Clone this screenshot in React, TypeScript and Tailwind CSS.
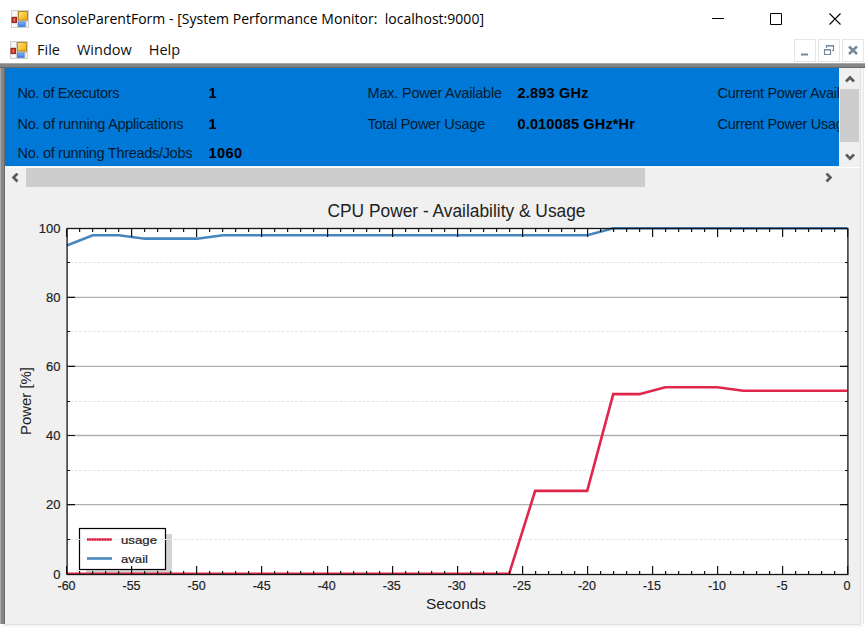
import React from "react";

const px = (t: number) => 66.8 + (t + 60) * 13.01;
const py = (v: number) => 573.8 - v * 3.455;
const points = (data: number[][]) => data.map(([t, v]) => `${px(t)},${py(v)}`).join(" ");

const usage = [[-60, 0], [-26, 0], [-24, 24], [-20, 24], [-18, 52], [-16, 52], [-14, 54], [-10, 54], [-8, 53], [0, 53]];
const avail = [[-60, 95], [-58, 98], [-56, 98], [-54, 97], [-50, 97], [-48, 98], [-20, 98], [-18, 100], [0, 100]];
const seconds = Array.from({ length: 61 }, (_, i) => i - 60);

function FormIcon() {
  return (
    <svg width="18" height="18" viewBox="0 0 18 18" className="shrink-0">
      <defs>
        <linearGradient id="gold" x1="0" y1="0" x2="1" y2="1">
          <stop offset="0" stopColor="#ffe680" />
          <stop offset="1" stopColor="#efa800" />
        </linearGradient>
        <linearGradient id="blue" x1="0" y1="0" x2="0" y2="1">
          <stop offset="0" stopColor="#8db8f5" />
          <stop offset="1" stopColor="#3b75d6" />
        </linearGradient>
      </defs>
      <rect x="0" y="0" width="18" height="18" fill="#cfcfcf" />
      <path d="M1 1h5v5H1zM1 13.5h5V17H1zM15.5 12H17v5h-1.500z" fill="#f6f6f6" />
      <rect x="7.5" y="1.5" width="9" height="8.500" fill="url(#gold)" stroke="#b98a20" />
      <rect x="1" y="7.5" width="4.500" height="5" fill="#c8321e" stroke="#9c2a20" />
      <path d="M3.300 8.500v3" stroke="#f0a090" />
      <rect x="7.5" y="12" width="6.5" height="4.500" fill="url(#blue)" stroke="#5386d8" />
    </svg>
  );
}

function Arrow({ d }: { d: string }) {
  return (
    <svg width="10" height="10" viewBox="0 0 10 10" fill="none" stroke="#5c5c5c" strokeWidth="2.7">
      <path d={d} />
    </svg>
  );
}

function ChildButton({ children }: { children: React.ReactNode }) {
  return <div className="flex h-[23px] w-[22px] items-center justify-center border border-[#e6e6e6] bg-white">{children}</div>;
}

function Chart() {
  return (
    <svg width="855" height="437" viewBox="5 187 855 437" className="block font-['Liberation_Sans',sans-serif]">
      <text x="327.5" y="216.6" fontSize="17.5" fill="#222" textLength="258" lengthAdjust="spacingAndGlyphs">CPU Power - Availability &amp; Usage</text>
      <rect x="67" y="228" width="781" height="347" fill="#fff" />
      <path d="M86 534h86v40H86z" fill="#d3d3d3" />
      <rect x="79.5" y="528.5" width="86" height="41" fill="#fff" stroke="#000" strokeWidth="1.2" />
      {[10, 30, 50, 70, 90].map((v) => (
        <line key={v} x1="70" x2="845" y1={Math.floor(py(v)) + 0.5} y2={Math.floor(py(v)) + 0.5} stroke="#e4e4e4" strokeDasharray="3 1.5" />
      ))}
      {[20, 40, 60, 80].map((v) => (
        <line key={v} x1="67" x2="848" y1={py(v) - 0.1} y2={py(v) - 0.1} stroke="#b0b0b0" strokeWidth="1.3" />
      ))}
      <path d="M87 539.5h25" stroke="#e8607c" strokeWidth="2.8" />
      <path d="M87 539.5h25" stroke="#d01238" strokeWidth="1.6" strokeDasharray="1.500 1" />
      <path d="M87 558.5h25" stroke="#4a88bd" strokeWidth="2.6" />
      <text x="121" y="544" fontSize="11.5" fill="#222" stroke="#222" strokeWidth="0.2" textLength="36" lengthAdjust="spacingAndGlyphs">usage</text>
      <text x="121" y="563" fontSize="11.5" fill="#222" stroke="#222" strokeWidth="0.2" textLength="27" lengthAdjust="spacingAndGlyphs">avail</text>
      <g fill="none" strokeWidth="2.6">
        <polyline points={points(avail)} stroke="#4685bd" />
        <polyline points={points(usage)} stroke="#e0264a" />
      </g>
      <g stroke="#111" strokeWidth="1.2">
        {seconds.map((t) => {
          const x = Math.floor(px(t)) + 0.6;
          const n = t % 5 === 0 ? 8 : 3;
          return <path key={t} d={`M${x} 574v${-n}M${x} 229v${n}`} />;
        })}
        {[10, 20, 30, 40, 50, 60, 70, 80, 90].map((v) => {
          const y = v % 20 === 0 ? py(v) - 0.1 : Math.floor(py(v)) + 0.5;
          const n = v % 20 === 0 ? 8 : 3;
          return <path key={v} d={`M67 ${y}h${n}M848 ${y}h${-n}`} />;
        })}
        <rect x="67.1" y="228.5" width="780.8" height="346" fill="none" stroke="#151515" strokeWidth="1.3" />
      </g>
      <g fontSize="13" fill="#222" stroke="#222" strokeWidth="0.2">
        {[0, 20, 40, 60, 80, 100].map((v) => (
          <text key={v} x="60.5" y={py(v) + 4.7} textAnchor="end">{v}</text>
        ))}
        {[-60, -55, -50, -45, -40, -35, -30, -25, -20, -15, -10, -5, 0].map((t) => (
          <text key={t} x={px(t) - 0.3} y="590.2" textAnchor="middle" textLength={t === 0 ? 7 : t === -5 ? 11 : 18} lengthAdjust="spacingAndGlyphs">{t}</text>
        ))}
      </g>
      <text x="426" y="608.7" fontSize="15.5" fill="#222" textLength="60" lengthAdjust="spacingAndGlyphs">Seconds</text>
      <text transform="translate(31 435) rotate(-90)" fontSize="15" fill="#222" textLength="68" lengthAdjust="spacingAndGlyphs">Power [%]</text>
    </svg>
  );
}

export default function App() {
  return (
    <div className="flex h-[629px] w-[865px] flex-col overflow-hidden bg-white font-['Open_Sans',sans-serif] text-black">
      <header className="flex h-[37px] shrink-0 items-center pl-[11px] pr-[24px]">
        <FormIcon />
        <span className="ml-[6px] whitespace-pre text-[14px] tracking-[0.02px]">ConsoleParentForm - [System Performance Monitor:  localhost:9000]</span>
        <svg width="129" height="13" viewBox="712 12 129 13" className="ml-auto shrink-0" fill="none" stroke="#000">
          <path d="M712 18.5h12M770.5 13.5h11v11h-11z" />
          <path d="M829.5 13.5l11 11M840.5 13.5l-11 11" strokeWidth="1.1" />
        </svg>
      </header>
      <nav className="flex h-[26px] shrink-0 items-center gap-[17px] pl-[10px] pr-[1px] text-[14.5px] text-[#111]">
        <FormIcon />
        <span className="-ml-[8px]">File</span>
        <span>Window</span>
        <span>Help</span>
        <div className="ml-auto flex gap-[2px]">
          <ChildButton>
            <svg width="12" height="12"><path d="M2 10.500h7" stroke="#76879b" strokeWidth="2" /></svg>
          </ChildButton>
          <ChildButton>
            <svg width="12" height="12" fill="none" stroke="#76879b" strokeWidth="1.2"><path d="M3.500 4V1.500h7v5H9M3 2h8M1.500 5.500h6v5h-6zM1 6h7" /></svg>
          </ChildButton>
          <ChildButton>
            <svg width="12" height="12"><path d="M2 2.500l8 7.500M10 2.500l-8 7.500" stroke="#76879b" strokeWidth="2.5" /></svg>
          </ChildButton>
        </div>
      </nav>
      <main className="flex h-[566px] shrink-0 flex-col">
        <div className="h-px bg-[#a8a8a8]" />
        <div className="h-[3px] bg-[#858787]" />
        <div className="h-px bg-[#666]" />
        <div className="flex h-[556px]">
          <div className="w-px bg-[#aaa]" />
          <div className="w-[3px] bg-[#858787]" />
          <div className="w-px bg-[#6b6b6b]" />
          <div className="w-[855px] bg-[#f0f0f0]">
            <div className="flex h-[99px]">
              <div className="flex h-[98px] w-[834px] gap-[40px] overflow-hidden whitespace-nowrap bg-[#0078d7] pl-[12.5px] pt-[15px] font-['Liberation_Sans',sans-serif] text-[14.5px] leading-[20px] text-[#021a2e]">
                <div className="grid h-[80px] w-[310px] shrink-0 grid-cols-[191px_1fr] grid-rows-[31px_29px_20px]">
                  <span className="tracking-[-0.35px]">No. of Executors</span><b className="text-black">1</b>
                  <span className="tracking-[-0.25px]">No. of running Applications</span><b className="text-black">1</b>
                  <span className="tracking-[-0.3px]">No. of running Threads/Jobs</span><b className="tracking-[0.4px] text-black">1060</b>
                </div>
                <div className="grid h-[60px] w-[310px] shrink-0 grid-cols-[150px_1fr] grid-rows-[31px_29px]">
                  <span className="tracking-[-0.2px]">Max. Power Available</span><b className="tracking-[0.2px] text-black">2.893 GHz</b>
                  <span className="tracking-[-0.25px]">Total Power Usage</span><b className="tracking-[0.15px] text-black">0.010085 GHz*Hr</b>
                </div>
                <div className="grid h-[60px] shrink-0 grid-rows-[31px_29px] tracking-[-0.3px]">
                  <span>Current Power Available</span>
                  <span>Current Power Usage</span>
                </div>
              </div>
              <div className="ml-px flex h-[98px] w-[19px] flex-col items-center">
                <div className="flex h-[21px] shrink-0 items-center"><Arrow d="M1 7.500l4-4 4 4" /></div>
                <div className="h-[53px] w-[19px] shrink-0 bg-[#cdcdcd]" />
                <div className="flex h-[24px] shrink-0 items-center pt-[6px]"><Arrow d="M1 2.500l4 4 4-4" /></div>
              </div>
            </div>
            <div className="flex h-[20px] items-center border-t border-white">
              <div className="flex w-[21px] shrink-0 justify-center"><Arrow d="M6.500 .5L2.500 4.500l4 4" /></div>
              <div className="h-[19px] w-[619px] shrink-0 bg-[#cdcdcd]" />
              <div className="ml-[178px]"><Arrow d="M3.500 .5l4 4-4 4" /></div>
            </div>
            <Chart />
          </div>
          <div className="w-px bg-[#e1e1e1]" />
          <div className="w-[2px] bg-[#f7f7f7]" />
          <div className="w-px bg-[#e8e8e8]" />
        </div>
        <div className="ml-[4px] h-px w-[857px] bg-[#e1e1e1]" />
        <div className="ml-[2px] h-[2px] w-[861px] bg-[#f5f5f5]" />
      </main>
    </div>
  );
}
